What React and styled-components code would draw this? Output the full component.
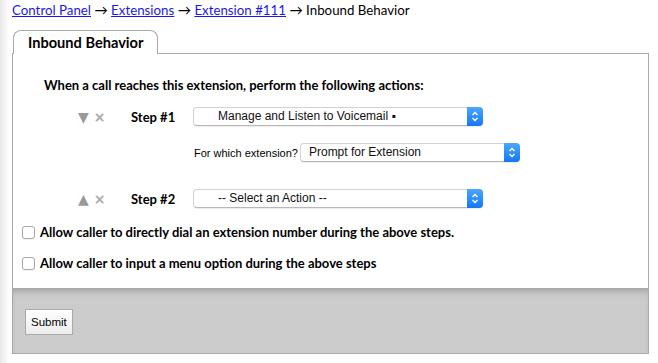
import React from 'react';
import styled, { createGlobalStyle } from 'styled-components';

const GlobalStyle = createGlobalStyle`
  body {
    margin: 0;
    font-family: Lato, "Open Sans", "DejaVu Sans", sans-serif;
    color: #000;
    background: linear-gradient(to right, #e9e9e9 0, #f3f3f3 5px, #fff 9px) no-repeat;
    background-size: 9px 100%;
    min-height: 363px;
  }
`;

const Page = styled.div`
  padding: 1px 9px 0 12px;
`;

const Breadcrumb = styled.div`
  font-size: 13.3px;
  line-height: 18px;
  a {
    color: #1a1ae6;
    text-decoration: underline;
  }
`;

const TabBar = styled.div`
  display: flex;
  margin-top: 10px;
  padding-left: 1px;
`;

const Tab = styled.div`
  position: relative;
  top: 1px;
  background: #fff;
  border: 1px solid #aaa;
  border-bottom: none;
  border-radius: 8px 8px 0 0;
  padding: 2px 14px 2px 14px;
  font-size: 14.6px;
  font-weight: 700;
  line-height: 19px;
`;

const Panel = styled.div`
  border: 1px solid #aaa;
  background: #fff;
`;

const Content = styled.div`
  padding: 22px 9px 12px 9px;
  height: 234px;
  box-sizing: border-box;
`;

const Heading = styled.div`
  margin-left: 22px;
  font-size: 13px;
  font-weight: 700;
  line-height: 18px;
`;

const StepGrid = styled.div`
  display: grid;
  grid-template-columns: 53px 62px auto;
  align-items: center;
  margin-left: 56px;
  margin-top: ${p => p.$top}px;
`;

const Controls = styled.div`
  display: flex;
  align-items: center;
  gap: 5px;
`;

const Arrow = styled.span`
  font-family: "DejaVu Sans", sans-serif;
  font-size: 14px;
  line-height: 14px;
  color: #999;
`;

const Remove = styled.span`
  font-family: "DejaVu Sans", sans-serif;
  font-size: 14px;
  line-height: 14px;
  color: #aaa;
  font-weight: 700;
`;

const StepLabel = styled.div`
  font-size: 13px;
  font-weight: 700;
  line-height: 18px;
`;

const SubRow = styled.div`
  grid-column: 3;
  display: flex;
  align-items: center;
  gap: 2px;
  margin-top: 17px;
  font-family: "Liberation Sans", Arial, sans-serif;
  font-size: 11px;
  margin-left: 1px;
`;

const FakeSelect = styled.div`
  position: relative;
  width: ${p => p.$width}px;
  height: 19px;
  box-sizing: border-box;
  border: 1px solid #d2d2d2;
  border-bottom-color: #b8b8b8;
  border-radius: 4px;
  background: #fff;
  box-shadow: 0 1px 1px rgba(0, 0, 0, 0.08);
  font-family: "Liberation Sans", Arial, sans-serif;
  font-size: 12px;
  line-height: 17px;
  padding-left: ${p => p.$indent}px;
  color: #111;
  white-space: nowrap;
`;

const SelectButton = styled.span`
  position: absolute;
  top: -1px;
  right: -1px;
  bottom: -1px;
  width: 16px;
  border-radius: 0 4px 4px 0;
  background: linear-gradient(#4ba6fd, #1677f6);
  display: flex;
  align-items: center;
  justify-content: center;
`;

const CheckRow = styled.label`
  display: flex;
  align-items: center;
  gap: 5px;
  font-size: 13px;
  font-weight: 700;
  line-height: 18px;
  margin-top: ${p => p.$top}px;
`;

const Box = styled.span`
  width: 11px;
  height: 11px;
  border: 1px solid #a8a8a8;
  border-radius: 3px;
  background: #fff;
  box-shadow: 0 1px 1px rgba(0, 0, 0, 0.06);
`;

const Footer = styled.div`
  background: #ccc;
  border-top: 1px solid #aaa;
  box-shadow: inset 0 5px 6px -3px rgba(0, 0, 0, 0.22);
  padding: 20px 12px 18px;
`;

const SubmitButton = styled.button`
  display: block;
  height: 26px;
  padding: 0 5px;
  border: 1px solid #aaa;
  background: linear-gradient(#fff, #ececec);
  font-family: "Liberation Sans", Arial, sans-serif;
  font-size: 11.5px;
  color: #000;
`;

const Chevrons = () => (
  <svg width="8" height="11" viewBox="0 0 8 11">
    <path d="M1.5 4 L4 1.5 L6.5 4 M1.5 7 L4 9.5 L6.5 7" fill="none" stroke="#fff" strokeWidth="1.4" />
  </svg>
);

const Select = ({ width, indent, children }) => (
  <FakeSelect $width={width} $indent={indent}>
    {children}
    <SelectButton><Chevrons /></SelectButton>
  </FakeSelect>
);

export default function App() {
  return (
    <>
      <GlobalStyle />
      <Page>
        <Breadcrumb>
          <a href="#">Control Panel</a> → <a href="#">Extensions</a> → <a href="#">Extension #111</a> → Inbound Behavior
        </Breadcrumb>
        <TabBar>
          <Tab>Inbound Behavior</Tab>
        </TabBar>
        <Panel>
          <Content>
            <Heading>When a call reaches this extension, perform the following actions:</Heading>
            <StepGrid $top={13}>
              <Controls><Arrow>▼</Arrow><Remove>×</Remove></Controls>
              <StepLabel>Step #1</StepLabel>
              <Select width={290} indent={24}>Manage and Listen to Voicemail ▪</Select>
              <SubRow>
                For which extension?
                <Select width={220} indent={8}>Prompt for Extension</Select>
              </SubRow>
            </StepGrid>
            <StepGrid $top={27}>
              <Controls><Arrow>▲</Arrow><Remove>×</Remove></Controls>
              <StepLabel>Step #2</StepLabel>
              <Select width={290} indent={24}>-- Select an Action --</Select>
            </StepGrid>
            <CheckRow $top={15}><Box />Allow caller to directly dial an extension number during the above steps.</CheckRow>
            <CheckRow $top={13}><Box />Allow caller to input a menu option during the above steps</CheckRow>
          </Content>
          <Footer>
            <SubmitButton>Submit</SubmitButton>
          </Footer>
        </Panel>
      </Page>
    </>
  );
}
